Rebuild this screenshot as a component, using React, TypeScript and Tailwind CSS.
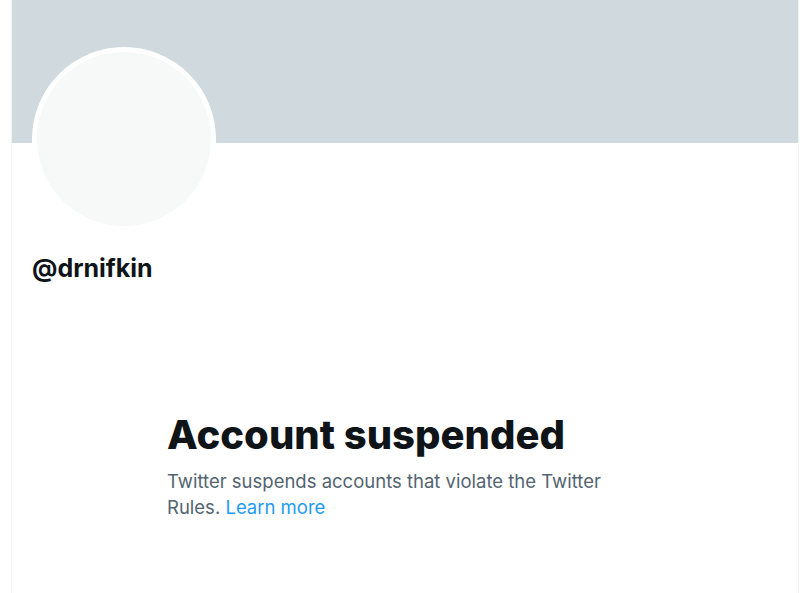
export default function App() {
  return (
    <div className="min-h-[593px] w-[800px] bg-white" style={{ fontFamily: 'Inter, "Noto Sans", sans-serif' }}>
      <div className="ml-[11px] w-[788px] min-h-[593px] border-x border-[#eff3f4]">
        <div className="h-[143px] bg-[#cfd9de]" />
        <div className="px-[20px]">
          <div className="-mt-[96px] h-[184px] w-[184px] rounded-full border-[5px] border-white bg-[#f7f9f9]" />
          <div className="mt-[22px] text-[25px] font-bold leading-[30px] text-[#0f1419]">@drnifkin</div>
        </div>
        <div className="mt-[128px] flex justify-center">
          <div className="w-[476px]">
            <h1 className="text-[40px] font-extrabold leading-[48px] text-[#0f1419]">Account suspended</h1>
            <p className="mt-[9px] text-[18.5px] leading-[26px] text-[#536471]">
              Twitter suspends accounts that violate the Twitter Rules.{' '}
              <span className="text-[#1d9bf0]">Learn more</span>
            </p>
          </div>
        </div>
      </div>
    </div>
  );
}
